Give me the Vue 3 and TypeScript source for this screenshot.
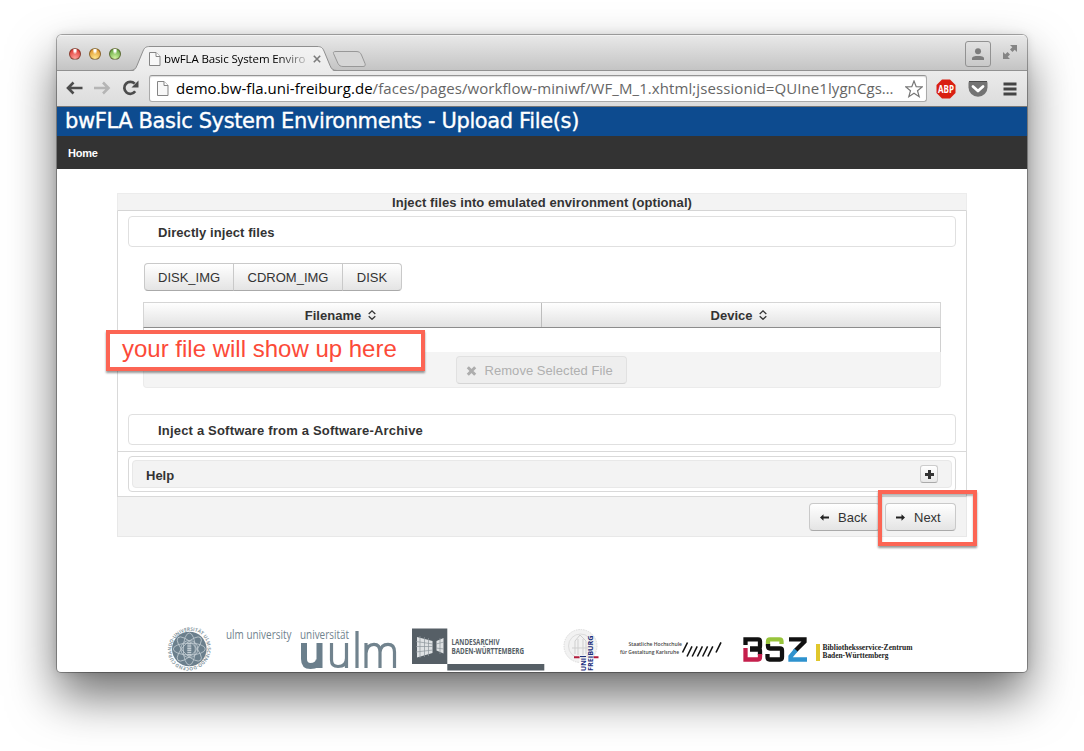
<script setup lang="ts">
const uploads: string[] = ['DISK_IMG', 'CDROM_IMG', 'DISK']
const columns: string[] = ['Filename', 'Device']
const petals: number[] = [0, 45, 90, 135]
const slashes: number[] = [687, 692.2, 697.4, 702.6, 707.8]
</script>

<template>
  <div class="desktop">
    <div class="window">
      <div class="tabstrip">
        <div class="lights"><i class="red"></i><i class="amber"></i><i class="green"></i></div>
        <div class="tab">
          <svg class="tab-shape" width="238" height="26" viewBox="0 0 238 26">
            <defs>
              <linearGradient id="tabfill" x1="0" y1="0" x2="0" y2="1">
                <stop offset="0" stop-color="#f3f3f3" /><stop offset="1" stop-color="#ebebeb" />
              </linearGradient>
            </defs>
            <path d="M0 25.5C4 25.5 5.500 24 7 20.500L13 5C14.500 1.500 16 .5 20 .5H187C191 .5 192.500 1.500 194 5L200 20.500C201.500 24 203 25.500 207 25.500V26H0Z" fill="url(#tabfill)" />
            <path d="M0 24.500C4 24.500 5.500 23 7 19.500L13 5C14.500 1.500 16 .5 20 .5H187C191 .5 192.500 1.500 194 5L200 19.500C201.500 23 203 24.500 207 24.500" fill="none" stroke="#8f8f8f" />
            <path d="M206 5.500H226C229 5.500 230.500 6.500 231.500 9L235 17.500C235.700 19.500 235 20.500 233 20.500H213C210.500 20.500 209 19.500 208 17.500L203.500 7.500C203 6 204 5.500 206 5.500Z" fill="#d6d6d6" stroke="#989898" />
          </svg>
          <div class="tab-content">
            <svg width="12" height="14" viewBox="0 0 12 14"><path d="M.5.5H7L11 4.500V13.500H.5Z" fill="#f8f8f8" stroke="#858585" /><path d="M7 .5V4.500H11" fill="#fff" stroke="#858585" /></svg>
            <span class="tab-title">bwFLA Basic System Enviro</span>
            <svg width="8" height="8" viewBox="0 0 8 8"><path d="M.8.8L7.200 7.200M7.200.8L.8 7.200" stroke="#7b7b7b" stroke-width="1.600" /></svg>
          </div>
        </div>
        <div class="profile">
          <svg width="14" height="13" viewBox="0 0 14 13"><circle cx="7" cy="3.200" r="3" fill="#7c7c7c" /><path d="M1 12V10.500C1 8.500 4 8 7 8S13 8.500 13 10.500V12Z" fill="#7c7c7c" /></svg>
        </div>
        <svg class="expand" width="16" height="16" viewBox="0 0 16 16"><path d="M8 1H15V8L12.700 5.700L10.500 8L8 5.500L10.300 3.300ZM1 8L3.300 10.300L5.500 8L8 10.500L5.700 12.700L8 15H1Z" fill="#858585" /></svg>
      </div>

      <div class="toolbar">
        <svg class="nav" width="74" height="18" viewBox="0 0 74 18">
          <path d="M8.500 3.500L3 9L8.500 14.500M3 9H17.500" fill="none" stroke="#4c4c4c" stroke-width="2.600" />
          <path d="M38 3.500L43.500 9L38 14.500M43.500 9H29" fill="none" stroke="#b5b5b5" stroke-width="2.600" />
          <path d="M70.200 12.300A6 6 0 1 1 69.700 4.700" fill="none" stroke="#4c4c4c" stroke-width="2.700" />
          <path d="M73.500 1.500V8.500H66.500Z" fill="#4c4c4c" />
        </svg>
        <div class="omnibox">
          <svg width="12" height="15" viewBox="0 0 12 15"><path d="M.5.5H7L11 4.500V14.500H.5Z" fill="#f8f8f8" stroke="#858585" /><path d="M7 .5V4.500H11" fill="#fff" stroke="#858585" /></svg>
          <div class="url"><span class="host">demo.bw-fla.uni-freiburg.de</span><span class="path">/faces/pages/workflow-miniwf/WF_M_1.xhtml;jsessionid=QUIne1lygnCgs…</span></div>
          <svg class="star" width="18" height="18" viewBox="0 0 18 18"><path d="M9 1L11.200 6.600L17.200 6.900L12.500 10.700L14.200 16.700L9 13.300L3.800 16.700L5.500 10.700L.8 6.900L6.800 6.600Z" fill="#fff" stroke="#777" stroke-width="1.200" /></svg>
        </div>
        <svg class="abp" width="20" height="20" viewBox="0 0 20 20"><path d="M6 .5H14L19.500 6V14L14 19.500H6L.5 14V6Z" fill="#d91f11" /><text x="10" y="13.500" text-anchor="middle" textLength="16" lengthAdjust="spacingAndGlyphs" font-size="10" font-weight="700" fill="#fff">ABP</text></svg>
        <svg class="pocket" width="20" height="18" viewBox="0 0 20 18"><path d="M2 1H18Q19.500 1 19.500 3V7.500A9.500 9.300 0 0 1 .5 7.500V3Q.5 1 2 1Z" fill="#737373" /><path d="M1 1.500H19" stroke="#4b4b4b" /><path d="M5 6.500L10 11L15 6.500" fill="none" stroke="#fff" stroke-width="2.800" stroke-linecap="round" stroke-linejoin="round" /></svg>
        <svg class="burger" width="14" height="14" viewBox="0 0 14 14"><path d="M.5 2H13.500M.5 7H13.500M.5 12H13.500" stroke="#444" stroke-width="2.800" /></svg>
      </div>

      <header class="banner"><h1>bwFLA Basic System Environments - Upload File(s)</h1></header>
      <nav class="menubar"><span>Home</span></nav>

      <main class="page">
        <section class="panel">
          <div class="panel-head"><span>Inject files into emulated environment (optional)</span></div>
          <div class="panel-body">
            <div class="accordion"><span>Directly inject files</span></div>
            <div class="uploads">
              <button v-for="name in uploads" :key="name" class="btn">{{ name }}</button>
            </div>
            <div class="table">
              <div class="thead">
                <div v-for="column in columns" :key="column" class="th">
                  <span>{{ column }}</span>
                  <svg width="8" height="10" viewBox="0 0 8 10"><path d="M.7 4L4 .9L7.300 4M.7 6.300L4 9.300L7.300 6.300" fill="none" stroke="#333" stroke-width="1.300" /></svg>
                </div>
              </div>
              <div class="tbody"></div>
              <div class="tfoot">
                <button class="btn disabled">
                  <svg width="11" height="10" viewBox="0 0 11 10"><path d="M1.800 1.300L9.200 8.700M9.200 1.300L1.800 8.700" stroke="#adadad" stroke-width="3" /></svg>
                  <span>Remove Selected File</span>
                </button>
              </div>
            </div>
            <div class="accordion second"><span>Inject a Software from a Software-Archive</span></div>
          </div>
          <div class="help-row">
            <div class="help">
              <div class="help-head">
                <span>Help</span>
                <div class="plus"><svg width="9" height="9" viewBox="0 0 9 9"><path d="M4.500 0V9M0 4.500H9" stroke="#333" stroke-width="3" /></svg></div>
              </div>
            </div>
          </div>
          <div class="panel-foot">
            <button class="btn step">
              <svg width="9" height="7" viewBox="0 0 9 7"><path d="M0 3.500L3.500.3V2.600H9V4.400H3.500V6.700Z" fill="#222" /></svg><span>Back</span>
            </button>
            <button class="btn step">
              <svg width="9" height="7" viewBox="0 0 9 7"><path d="M9 3.500L5.500.3V2.600H0V4.400H5.500V6.700Z" fill="#222" /></svg><span>Next</span>
            </button>
          </div>
        </section>

        <footer class="logos">
          <svg width="50" height="50" viewBox="164 622 50 50">
            <path id="sealring" d="M176.200 662.700A19 19 0 0 1 202.400 635.300A19 19 0 0 1 176.200 662.700" fill="none" />
            <text font-size="4.800" font-weight="700" fill="#8797a1"><textPath href="#sealring" textLength="118">CURANDO·UNIVERSITÄT ULM·SCIENDO·DOCENDO·</textPath></text>
            <circle cx="189.300" cy="649" r="17.300" fill="#6b7f8c" />
            <g fill="none" stroke="#c3cdd3" stroke-width=".8">
              <ellipse v-for="angle in petals" :key="angle" cx="189.300" cy="649" rx="16" ry="6" :transform="`rotate(${angle} 189.3 649)`" />
              <circle cx="189.300" cy="649" r="8.500" />
              <path d="M189.300 643V656" stroke-width="4" stroke-dasharray="1.500 .7" />
            </g>
          </svg>
          <svg class="l-ulm" width="176" height="50" viewBox="224 622 176 50" fill="none">
            <g fill="#71838e" font-size="11.800">
              <text x="226" y="639" textLength="65.500" lengthAdjust="spacingAndGlyphs">ulm university</text>
              <text x="300" y="639" textLength="49" lengthAdjust="spacingAndGlyphs">universität</text>
            </g>
            <path d="M304 643V659Q304 666 310.500 666Q318 666 318.800 660M319.500 643V668" stroke="#6b7f8c" stroke-width="6" />
            <path d="M331.500 643V660Q331.500 666.500 338 666.500Q346.500 666.500 346.500 658V643V668M357 631V668M366 668V643V653Q367 644.300 374 644.300Q380 644.300 380 652V668V652Q381 644.300 388 644.300Q394.500 644.300 394.500 652V668" stroke="#71838e" stroke-width="3.200" />
          </svg>
          <svg class="l-archive" width="135" height="50" viewBox="411 622 135 50">
            <path d="M412 628.500H447.300V664H412ZM447.300 664H544.300V670.500H447.300Z" fill="#565f66" />
            <path d="M417 637L432.500 641V653L417 657.500ZM436.500 641L443.500 638V653.500L436.500 650.500Z" fill="#dfe2e4" />
            <path d="M420 636V658M424.500 637V657M428.500 638V656M416 641.500L433 644M416 646.500H433M416 652L433 650M440 638V654M436 644L444 642M436 648L444 649" stroke="#8d959b" stroke-width=".7" />
            <g fill="#565f66" font-size="8" font-weight="700"><text x="451.500" y="645" textLength="48" lengthAdjust="spacingAndGlyphs">LANDESARCHIV</text><text x="451.500" y="653.600" textLength="72.500" lengthAdjust="spacingAndGlyphs">BADEN-WÜRTTEMBERG</text></g>
          </svg>
          <svg class="l-freiburg" width="38" height="50" viewBox="562 622 38 50">
            <g fill="none" stroke="#dcdcdc"><circle cx="580.500" cy="646" r="16.500" fill="#f2f2f2" stroke-width="1" stroke-dasharray="1.500 1" /><circle cx="580.500" cy="646" r="12" /><path d="M575 654V641L580 635L586 641V654M572 648H588M578 639V655M583 639V655" stroke="#cfcfcf" /></g>
            <path d="M579.500 658.500H593V672H579.500Z" fill="#fff" />
            <path d="M574 657.300H579.500M593.500 657.300H598.500" stroke="#b31b3d" stroke-width="2" />
            <path d="M580 656.500H586" stroke="#1c2f7d" />
            <g fill="#1c2f7d" font-size="7.800" font-weight="700">
              <text transform="translate(586 671) rotate(-90)" textLength="13" lengthAdjust="spacingAndGlyphs">UNI</text>
              <text transform="translate(592.700 671) rotate(-90)" textLength="35.500" lengthAdjust="spacingAndGlyphs">FREIBURG</text>
            </g>
          </svg>
          <svg class="l-hfg" width="106" height="50" viewBox="618 622 106 50">
            <g fill="#444" font-size="5.600" font-weight="600"><text x="628.500" y="646" textLength="53.500" lengthAdjust="spacingAndGlyphs">Staatliche Hochschule</text><text x="620" y="653.500" textLength="59" lengthAdjust="spacingAndGlyphs">für Gestaltung Karlsruhe</text></g>
            <path d="M682.500 652.500L687.500 642.500M716 652.500L721 642.300" stroke="#111" stroke-width="1.600" />
            <path v-for="x in slashes" :key="x" :d="`M${x} 656.500L${x + 5} 646.300`" stroke="#111" stroke-width="1.500" />
          </svg>
          <svg class="l-bsz" width="174" height="50" viewBox="741 622 174 50" fill="none">
            <g stroke-width="4.300">
              <path d="M745.500 645V639.300H758Q760 639.300 760 641.500V646Q760 648.300 758 648.300H750" stroke="#111" />
              <path d="M750 649.500H759Q760 649.500 760 651V655" stroke="#111" />
              <path d="M745.500 648V659.500H758Q760 659.500 760 657V654" stroke="#c51f4c" />
              <path d="M768 646V641.500Q768 639.300 770 639.300H779.500Q781.500 639.300 781.500 641.500V644" stroke="#98c43c" />
              <path d="M768 644V646Q768 648.500 770 648.500H780Q782 648.500 782 650.500V657Q782 659.500 780 659.500H769.500Q767.500 659.500 767.500 657V654" stroke="#111" />
              <path d="M789 639.300H804.500V641.500L795 651" stroke="#111" />
              <path d="M796 650L790.500 656.500V659.500H807" stroke="#2e92ce" />
            </g>
            <path d="M816 644H820V661H816Z" fill="#e0c72c" />
            <g class="serif" fill="#222" font-size="8.200" font-weight="700"><text x="822.500" y="650.300" textLength="90" lengthAdjust="spacingAndGlyphs">Bibliotheksservice-Zentrum</text><text x="822.500" y="658.400" textLength="66" lengthAdjust="spacingAndGlyphs">Baden-Württemberg</text></g>
          </svg>
        </footer>
      </main>
    </div>
    <div class="note"><span>your file will show up here</span></div>
    <div class="highlight"></div>
  </div>
</template>

<style>
body { margin: 0; background: #fff; }
</style>

<style scoped>
* { box-sizing: border-box; }
.desktop { position: relative; width: 1084px; height: 751px; padding: 35px 57px 0; overflow: hidden; background: #fff; font-family: "Liberation Sans", Arial, sans-serif; color: #333; }
svg { display: block; flex: none; font-family: "Open Sans", sans-serif; }
.window { width: 970px; height: 637px; border-radius: 5px 5px 4px 4px; overflow: hidden; background: #fff; display: flex; flex-direction: column; box-shadow: 0 0 0 1px rgba(0,0,0,.3), 0 0 10px rgba(0,0,0,.13), 0 24px 48px rgba(0,0,0,.57); }
.tabstrip { height: 36px; flex: none; display: flex; background: linear-gradient(#e9e9e9, #c4c4c4); border-bottom: 1px solid #919191; box-shadow: inset 0 1px #f3f3f3; }
.lights { display: flex; gap: 8px; padding: 13px 0 0 12px; width: 73px; }
.lights i { width: 12px; height: 12px; border-radius: 50%; border: 1px solid rgba(60,40,20,.55); }
.red { background: radial-gradient(ellipse at 50% 12%, #fff 0 12%, transparent 35%), radial-gradient(circle at 50% 90%, #ffa09a, #e2443f 75%); }
.amber { background: radial-gradient(ellipse at 50% 12%, #fff 0 12%, transparent 35%), radial-gradient(circle at 50% 90%, #ffe78d, #e4a037 75%); }
.green { background: radial-gradient(ellipse at 50% 12%, #fff 0 12%, transparent 35%), radial-gradient(circle at 50% 90%, #d1f5a0, #71b04c 75%); }
.tab { position: relative; width: 238px; height: 26px; margin: 11px 0 -1px 0; }
.tab-shape { position: absolute; left: 0; top: 0; }
.tab-content { position: relative; display: flex; align-items: center; padding: 0 0 0 19px; height: 25px; }
.tab-title { width: 142px; margin: 0 7px 0 3px; white-space: nowrap; font: 500 11.5px/16px "Open Sans", sans-serif; letter-spacing: -.12px; background: linear-gradient(90deg, #000 80%, #bbb); background-clip: text; -webkit-background-clip: text; color: transparent; }
.profile { width: 26px; height: 26px; margin: 6px 0 0 auto; border: 1px solid #929292; border-radius: 3px; display: grid; place-items: center; }
.expand { margin: 9px 9px 0 11px; }
.toolbar { height: 36px; flex: none; display: flex; align-items: center; background: linear-gradient(#ebebeb, #dcdcdc); border-bottom: 1px solid #777; padding-left: 8px; }
.nav { margin-bottom: 1px; }
.omnibox { width: 778px; height: 27px; margin: 0 9px 0 10px; display: flex; align-items: center; background: #fff; border: 1px solid #aaa; border-top-color: #949494; border-radius: 3px; padding: 0 3px 0 7px; box-shadow: inset 0 1px 1px #ddd; }
.url { width: 721px; margin-left: 7px; white-space: nowrap; font: 500 15px/22px "Open Sans", sans-serif; padding-bottom: 1px; }
.host { color: #000; letter-spacing: .03px; }
.path { color: #666; letter-spacing: .08px; }
.star { margin-left: auto; }
.pocket { margin-left: 12px; }
.burger { margin-left: 15px; }
.banner { height: 29px; flex: none; background: #0d4b8f; }
h1 { margin: 0; padding-left: 8px; font: 21px/28px "DejaVu Sans", Verdana, sans-serif; letter-spacing: -.37px; -webkit-text-stroke: .35px #fff; color: #fff; white-space: nowrap; }
.menubar { height: 33px; flex: none; background: #333; color: #fff; font-size: 11px; font-weight: 700; line-height: 34px; padding-left: 11px; letter-spacing: -.2px; }
.page { flex: 1; padding: 24px 60px 0; display: flex; flex-direction: column; }
.panel { width: 850px; font-size: 13px; white-space: nowrap; }
.panel-head { height: 18px; border: 1px solid #ececec; border-bottom-color: #d5d5d5; background: #f3f3f3; text-align: center; line-height: 17px; font-weight: 700; letter-spacing: .08px; }
.panel-body { height: 241px; border: 1px solid #d9d9d9; border-top: 0; padding: 5px 10px 0; }
.accordion { height: 31px; border: 1px solid #e0e0e0; border-radius: 4px; padding-left: 29px; line-height: 31px; font-weight: 700; letter-spacing: .08px; }
.second { letter-spacing: .19px; }
.uploads { display: flex; margin: 16px 0 0 16px; }
.btn { height: 28px; border: 1px solid #c9c9c9; border-bottom-color: #aaa; background: linear-gradient(#fff, #e4e4e4); border-radius: 4px; font: 13px/24px "Liberation Sans", Arial, sans-serif; color: #333; padding: 1px 13px 0; white-space: nowrap; }
.uploads .btn { border-radius: 0; }
.uploads .btn:first-child { border-radius: 4px 0 0 4px; width: 90px; }
.uploads .btn:nth-child(2) { width: 110px; margin-left: -1px; }
.uploads .btn:last-child { border-radius: 0 4px 4px 0; width: 60px; margin-left: -1px; }
.table { width: 798px; margin: 11px 0 26px 15px; }
.thead { height: 26px; display: flex; background: linear-gradient(#fefefe, #e2e2e2); border: 1px solid #d5d5d5; border-bottom-color: #8c8c8c; }
.th { width: 397px; padding-right: 4px; display: flex; align-items: center; justify-content: center; gap: 7px; font-weight: 700; }
.th + .th { width: 399px; border-left: 1px solid #bdbdbd; }
.tbody { height: 24px; border: 1px solid #d0d0d0; border-width: 0 1px; }
.tfoot { height: 36px; background: #f4f4f4; border: 1px solid #ebebeb; border-top: 0; border-radius: 0 0 4px 4px; display: flex; justify-content: center; padding: 4px 2px 0 0; }
.disabled { width: 171px; display: flex; align-items: center; gap: 8px; padding: 1px 0 0 9px; background: #eee; border-color: #e1e1e1; border-bottom-color: #d5d5d5; color: #b0b0b0; letter-spacing: .05px; }
.help-row { height: 45px; border: 1px solid #d9d9d9; border-top: 0; padding: 4px 10px; }
.help { height: 36px; border: 1px solid #d9d9d9; border-radius: 4px; padding: 3px; }
.help-head { height: 28px; background: #f3f3f3; border: 1px solid #e8e8e8; border-radius: 4px; display: flex; align-items: center; justify-content: space-between; padding: 0 13px; font-weight: 700; }
.help-head span { padding-top: 2px; }
.plus { width: 18px; height: 18px; border: 1px solid #ccc; border-bottom-color: #aaa; border-radius: 3px; background: linear-gradient(#fff, #e8e8e8); display: grid; place-items: center; }
.panel-foot { height: 40px; background: #f3f3f3; border: 1px solid #e8e8e8; border-top: 0; display: flex; justify-content: flex-end; gap: 5px; padding: 6px 10px 0 0; }
.step { width: 71px; display: flex; align-items: center; gap: 9px; padding: 1px 0 0 10px; }
.logos { margin: 85px 0 0 47px; display: flex; height: 50px; }
.l-ulm { margin-left: 10px; }
.l-archive { margin-left: 11px; }
.l-freiburg { margin-left: 16px; }
.l-hfg { margin-left: 18px; }
.l-bsz { margin-left: 17px; }
.serif { font-family: "Liberation Serif", serif; }
.note { position: absolute; left: 106px; top: 330px; width: 319px; height: 41px; border: 4px solid #fc6554; background: #fff; box-shadow: 0 2px 2px rgba(0,0,0,.4); color: #fc4a38; font-size: 24px; line-height: 29px; padding-left: 12px; white-space: nowrap; }
.highlight { position: absolute; left: 878px; top: 490px; width: 99px; height: 56px; border: 4px solid #fc6554; box-shadow: 0 2px 2px rgba(0,0,0,.4), inset 0 2px 2px rgba(0,0,0,.3); }
</style>
